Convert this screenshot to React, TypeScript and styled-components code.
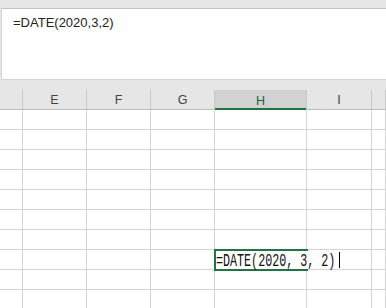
import React from 'react';
import styled, { createGlobalStyle } from 'styled-components';

const GlobalStyle = createGlobalStyle`
  html, body {
    margin: 0;
    padding: 0;
    background: #e6e6e6;
    overflow: hidden;
  }
  body {
    font-family: 'Liberation Sans', Arial, sans-serif;
  }
`;

const columns = [
  { name: '', width: 23 },
  { name: 'E', width: 64 },
  { name: 'F', width: 64 },
  { name: 'G', width: 64 },
  { name: 'H', width: 92 },
  { name: 'I', width: 65 },
  { name: '', width: 14 },
];

const ACTIVE_COL = 4;
const ACTIVE_ROW = 7;
const ROW_COUNT = 10;

const App = () => {
  return (
    <Page>
      <GlobalStyle />
      <TopStrip />
      <FormulaBar>
        <FormulaText>=DATE(2020,3,2)</FormulaText>
      </FormulaBar>
      <Spacer />
      <HeaderRow>
        {columns.map((col, i) => (
          <HeaderCell key={i} $w={col.width} $active={i === ACTIVE_COL}>
            {col.name}
          </HeaderCell>
        ))}
      </HeaderRow>
      <Grid>
        {Array.from({ length: ROW_COUNT }).map((_, r) => (
          <Row key={r}>
            {columns.map((col, c) => (
              <Cell key={c} $w={col.width}>
                {r === ACTIVE_ROW && c === ACTIVE_COL && (
                  <>
                    <ActiveFrame />
                    <Editor>
                      <EditorText>=DATE(2020, 3, 2)</EditorText>
                      <Caret />
                    </Editor>
                  </>
                )}
              </Cell>
            ))}
          </Row>
        ))}
      </Grid>
    </Page>
  );
};

const Page = styled.div`
  width: 386px;
  height: 308px;
  display: flex;
  flex-direction: column;
  background: #e6e6e6;
  overflow: hidden;
`;

const TopStrip = styled.div`
  height: 8px;
  flex-shrink: 0;
  background: #e6e6e6;
`;

const FormulaBar = styled.div`
  height: 72px;
  flex-shrink: 0;
  margin-left: 1px;
  background: #fff;
  border-top: 1px solid #c3c3c3;
  border-bottom: 1px solid #d4d4d4;
  border-left: 1px solid #d4d4d4;
  padding: 6px 0 0 11px;
  box-sizing: border-box;
`;

const FormulaText = styled.div`
  font-size: 13px;
  line-height: 16px;
  color: #222;
  font-family: 'Liberation Sans', Arial, sans-serif;
`;

const Spacer = styled.div`
  height: 10px;
  flex-shrink: 0;
  background: #e6e6e6;
`;

const HeaderRow = styled.div`
  display: flex;
  height: 20px;
  box-sizing: border-box;
  flex-shrink: 0;
  background: #e6e6e6;
  border-bottom: 1px solid #bdbdbd;
`;

const HeaderCell = styled.div<{ $w: number; $active: boolean }>`
  width: ${(p) => p.$w}px;
  flex-shrink: 0;
  box-sizing: border-box;
  border-right: 1px solid #c8c8c8;
  display: flex;
  align-items: center;
  justify-content: center;
  font-size: 12.5px;
  color: ${(p) => (p.$active ? '#2a5c3e' : '#444')};
  background: ${(p) => (p.$active ? '#d2d2d2' : 'transparent')};
  box-shadow: ${(p) => (p.$active ? 'inset 0 -2px 0 #217346' : 'none')};
  margin-bottom: ${(p) => (p.$active ? '-1px' : '0')};
  padding-top: 1px;
`;

const Grid = styled.div`
  display: flex;
  flex-direction: column;
  background: #fff;
  flex: 1;
`;

const Row = styled.div`
  display: flex;
  height: 20px;
  flex-shrink: 0;
`;

const Cell = styled.div<{ $w: number }>`
  position: relative;
  width: ${(p) => p.$w}px;
  flex-shrink: 0;
  box-sizing: border-box;
  border-right: 1px solid #d4d4d4;
  border-bottom: 1px solid #d4d4d4;
`;

const ActiveFrame = styled.div`
  position: absolute;
  left: -1px;
  top: -1px;
  width: 94px;
  height: 22px;
  box-sizing: border-box;
  border: 2px solid #217346;
  z-index: 2;
`;

const Editor = styled.div`
  position: absolute;
  left: 1px;
  top: 1px;
  height: 18px;
  width: 126px;
  background: #fff;
  z-index: 3;
  display: flex;
  align-items: center;
`;

const EditorText = styled.span`
  display: inline-block;
  font-family: 'Liberation Mono', 'Courier New', monospace;
  font-size: 18px;
  line-height: 18px;
  color: #111;
  white-space: pre;
  transform: scaleX(0.65);
  transform-origin: left center;
  width: 119px;
  margin-right: 4px;
  margin-top: 2px;
`;

const Caret = styled.span`
  width: 1px;
  height: 16px;
  background: #000;
`;

export default App;
